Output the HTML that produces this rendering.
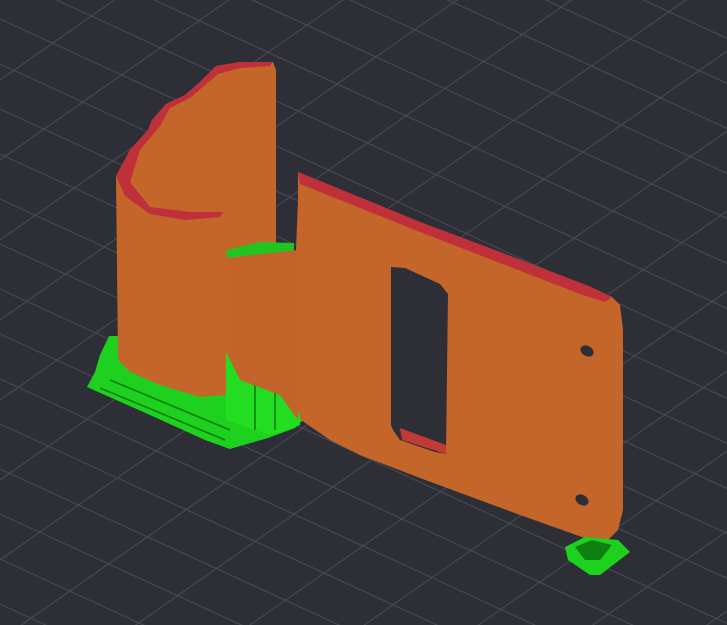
<!DOCTYPE html>
<html><head><meta charset="utf-8"><style>html,body{margin:0;padding:0;background:#2d2d35;overflow:hidden;width:727px;height:625px}svg{display:block}</style></head>
<body>
<svg width="727" height="625" viewBox="0 0 727 625" xmlns="http://www.w3.org/2000/svg">
<rect width="727" height="625" fill="#2e2e36"/>
<g stroke="#484853" stroke-width="1.2">
<line x1="-400" y1="-300" x2="1200" y2="436"/>
<line x1="-400" y1="-255" x2="1200" y2="481"/>
<line x1="-400" y1="-210" x2="1200" y2="526"/>
<line x1="-400" y1="-165" x2="1200" y2="571"/>
<line x1="-400" y1="-120" x2="1200" y2="616"/>
<line x1="-400" y1="-75" x2="1200" y2="661"/>
<line x1="-400" y1="-30" x2="1200" y2="706"/>
<line x1="-400" y1="15" x2="1200" y2="751"/>
<line x1="-400" y1="60" x2="1200" y2="796"/>
<line x1="-400" y1="105" x2="1200" y2="841"/>
<line x1="-400" y1="150" x2="1200" y2="886"/>
<line x1="-400" y1="195" x2="1200" y2="931"/>
<line x1="-400" y1="240" x2="1200" y2="976"/>
<line x1="-400" y1="285" x2="1200" y2="1021"/>
<line x1="-400" y1="330" x2="1200" y2="1066"/>
<line x1="-400" y1="375" x2="1200" y2="1111"/>
<line x1="-400" y1="420" x2="1200" y2="1156"/>
<line x1="-400" y1="465" x2="1200" y2="1201"/>
<line x1="-400" y1="510" x2="1200" y2="1246"/>
<line x1="-400" y1="555" x2="1200" y2="1291"/>
<line x1="-400" y1="-345" x2="1200" y2="391"/>
<line x1="-400" y1="-390" x2="1200" y2="346"/>
<line x1="-400" y1="-435" x2="1200" y2="301"/>
<line x1="-400" y1="-480" x2="1200" y2="256"/>
<line x1="-400" y1="-525" x2="1200" y2="211"/>
<line x1="-400" y1="-570" x2="1200" y2="166"/>
<line x1="-400" y1="-615" x2="1200" y2="121"/>
<line x1="-400" y1="-660" x2="1200" y2="76"/>
<line x1="-400" y1="-705" x2="1200" y2="31"/>
<line x1="-100" y1="70" x2="300" y2="-210"/>
<line x1="-100" y1="150" x2="400" y2="-200"/>
<line x1="-100" y1="230" x2="500" y2="-190"/>
<line x1="-100" y1="310" x2="600" y2="-180"/>
<line x1="-100" y1="390" x2="700" y2="-170"/>
<line x1="-100" y1="470" x2="800" y2="-160"/>
<line x1="-100" y1="550" x2="900" y2="-150"/>
<line x1="-100" y1="630" x2="1000" y2="-140"/>
<line x1="-100" y1="710" x2="1100" y2="-130"/>
<line x1="-100" y1="790" x2="1200" y2="-120"/>
<line x1="-100" y1="870" x2="1300" y2="-110"/>
<line x1="-100" y1="950" x2="1400" y2="-100"/>
<line x1="-100" y1="1030" x2="1500" y2="-90"/>
<line x1="-100" y1="1110" x2="1600" y2="-80"/>
<line x1="-100" y1="1190" x2="1700" y2="-70"/>
<line x1="-100" y1="1270" x2="1800" y2="-60"/>
</g>
<polygon points="87,387 95,372 100,355 109,336 294,336 300,355 305,418 295,428 268,438 240,446 230,449 205,440 150,415" fill="#1ed11e"/>
<polygon points="226,339 298,339 300,425 270,435 226,420" fill="#22dd22"/>
<g stroke="#0d7a0d" stroke-width="1.5">
<line x1="110" y1="380" x2="230" y2="430"/><line x1="100" y1="388" x2="225" y2="440"/>
<line x1="255" y1="350" x2="255" y2="430"/><line x1="275" y1="345" x2="275" y2="430"/>
</g>
<path d="M116,176 L130,150 L148,130 L152,120 L166,104 L185,95 L200,82 L216,66 L240,62 L273,62 L276,70 L276,245 L240,252 L228,258 L226,270 L235,310 L226,352 L226,395 L200,397 L160,385 L130,372 L118,360 Z" fill="#c4652a"/>
<path d="M116,176 L130,150 L148,130 L152,120 L166,104 L185,95 L200,82 L216,66 L240,62 L273,62 L270,66 L240,68 L218,74 L190,98 L170,108 L160,126 L140,150 L130,182 L150,207 L190,212 L223,212 L220,217 L185,220 L150,214 L125,196 Z" fill="#c0303a"/>
<polygon points="226,250 260,242 294,243 294,258 240,266 228,262" fill="#22c422"/>
<path d="M298,172 L420,222 L500,252 L591,287 L612,297 L620,305 L623,330 L623,510 L618,530 L608,540 L596,542 L520,515 L420,478 L360,455 L330,440 L301,420 L298,410 L296,350 L298,300 L296,250 L298,200 Z" fill="#c4652a"/>
<path d="M226,258 L298,250 L298,420 L280,395 L240,380 L226,352 Z" fill="#c2632a"/>
<polygon points="298,172 420,222 500,252 591,287 612,297 605,302 580,294 500,263 420,232 300,184" fill="#c0303a"/>
<path d="M391,267 L405,268 L440,284 L448,294 L446,454 L435,452 L400,440 L393,430 L391,425 Z" fill="#2e2e36"/>
<polygon points="400,428 446,445 446,454 402,440" fill="#c03a36"/>
<ellipse cx="587" cy="351" rx="7" ry="5" fill="#2e2e36" transform="rotate(30 587 351)"/>
<ellipse cx="582" cy="500" rx="7" ry="5" fill="#2e2e36" transform="rotate(30 582 500)"/>
<polygon points="565,547 585,537 618,540 630,552 600,575 590,575 568,560" fill="#1ed11e"/>
<polygon points="575,547 592,540 612,545 600,560 585,560" fill="#0f7f0f"/>
</svg>
</body></html>
